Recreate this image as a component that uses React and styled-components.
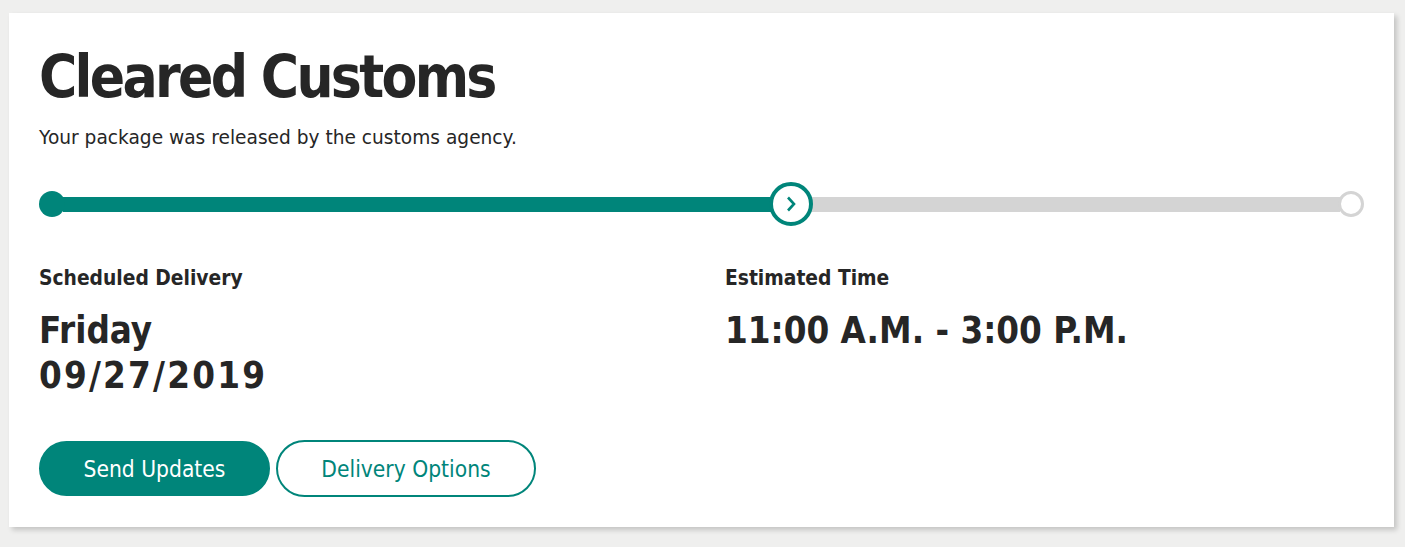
import styled, { createGlobalStyle } from "styled-components";

const teal = "#00857a";
const grey = "#d4d4d4";

const GlobalStyle = createGlobalStyle`
  body {
    margin: 0;
    background: #efefee;
    font-family: "DejaVu Sans Condensed", "DejaVu Sans", sans-serif;
    color: #262626;
  }
`;

const Page = styled.div`
  padding: 13px 11px 20px 9px;
`;

const Card = styled.div`
  background: #fff;
  box-shadow: 3px 3px 5px rgba(0, 0, 0, 0.18);
  padding: 32px 30px 30px 30px;
  height: 514px;
  box-sizing: border-box;
`;

const Title = styled.h1`
  margin: 0;
  font-size: 58px;
  font-weight: bold;
  line-height: 64px;
  letter-spacing: -2.7px;
`;

const Subtitle = styled.p`
  margin: 17px 0 0;
  font-family: "DejaVu Sans", sans-serif;
  font-size: 18.6px;
  line-height: 24px;
`;

const Track = styled.div`
  display: flex;
  align-items: center;
  margin-top: 31px;
  height: 46px;
`;

const Segment = styled.div`
  flex: ${({ $grow }) => $grow};
  height: 15px;
  background: ${({ $done }) => ($done ? teal : grey)};
  margin: 0 -2px;
`;

const Dot = styled.div`
  width: 26px;
  height: 26px;
  border-radius: 50%;
  box-sizing: border-box;
  flex-shrink: 0;
  position: relative;
  z-index: 1;
  background: ${({ $filled }) => ($filled ? teal : "#fff")};
  border: ${({ $filled }) => ($filled ? "none" : `3px solid ${grey}`)};
`;

const Current = styled.div`
  width: 44px;
  height: 44px;
  border-radius: 50%;
  border: 4px solid ${teal};
  background: #fff;
  box-sizing: border-box;
  flex-shrink: 0;
  display: flex;
  align-items: center;
  justify-content: center;
  position: relative;
  z-index: 1;
`;

const Info = styled.div`
  display: grid;
  grid-template-columns: 686px 1fr;
  margin-top: 38px;
`;

const Label = styled.div`
  font-size: 20.8px;
  font-weight: bold;
  line-height: 26px;
`;

const Value = styled.div`
  margin-top: 17px;
  font-size: 36.4px;
  font-weight: bold;
  line-height: 45px;
`;

const Digits = styled.span`
  letter-spacing: 2.2px;
`;

const Actions = styled.div`
  display: flex;
  gap: 6px;
  margin-top: 42px;
  align-items: center;
`;

const Button = styled.button`
  font-family: inherit;
  font-size: 22.6px;
  border-radius: 30px;
  cursor: pointer;
  box-sizing: border-box;
  border: 2px solid ${teal};
  background: ${({ $primary }) => ($primary ? teal : "#fff")};
  color: ${({ $primary }) => ($primary ? "#fff" : teal)};
  width: ${({ $w }) => $w}px;
  height: ${({ $h }) => $h}px;
`;

const App = () => {
  return (
    <Page>
      <GlobalStyle />
      <Card>
        <Title>Cleared Customs</Title>
        <Subtitle>Your package was released by the customs agency.</Subtitle>
        <Track>
          <Dot $filled />
          <Segment $done $grow={707} />
          <Current>
            <svg width="10" height="16" viewBox="0 0 10 16">
              <path d="M2 1.5 L8 8 L2 14.5" fill="none" stroke={teal} strokeWidth="2.6" />
            </svg>
          </Current>
          <Segment $grow={529} />
          <Dot />
        </Track>
        <Info>
          <div>
            <Label>Scheduled Delivery</Label>
            <Value>
              Friday
              <br />
              <Digits>09/27/2019</Digits>
            </Value>
          </div>
          <div>
            <Label>Estimated Time</Label>
            <Value>11:00 A.M. - 3:00 P.M.</Value>
          </div>
        </Info>
        <Actions>
          <Button $primary $w={231} $h={55}>
            Send Updates
          </Button>
          <Button $w={260} $h={57}>
            Delivery Options
          </Button>
        </Actions>
      </Card>
    </Page>
  );
};

export default App;
